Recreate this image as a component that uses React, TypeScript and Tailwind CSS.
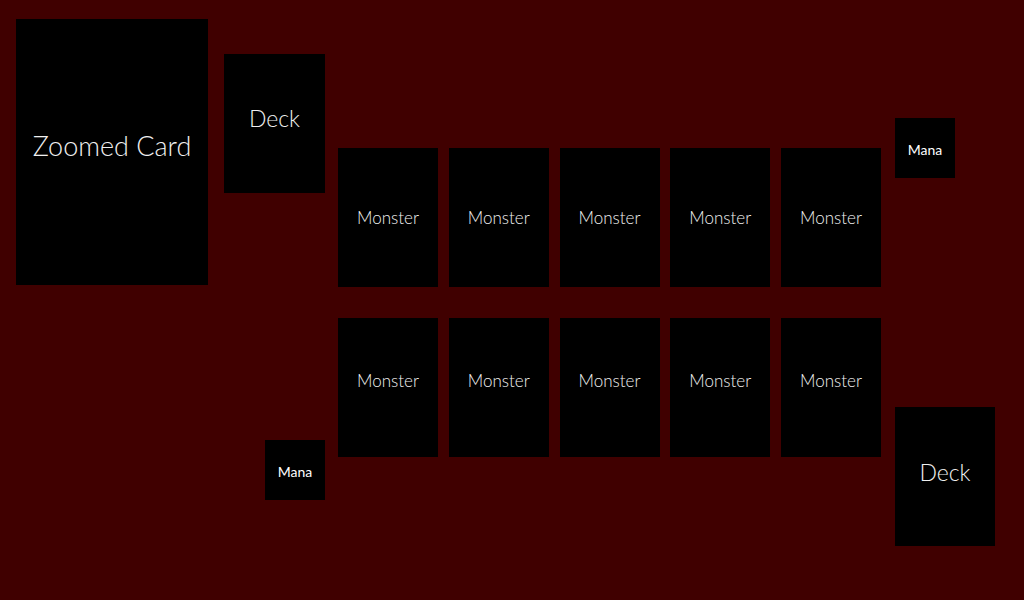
import React from 'react';

const Card: React.FC<{ label: string; className?: string; textClass?: string }> = ({ label, className = '', textClass = '' }) => (
  <div className={`bg-black flex items-center justify-center text-[#f0f0f0] ${className}`}>
    <span className={textClass}>{label}</span>
  </div>
);

const App: React.FC = () => {
  const monsters = Array.from({ length: 10 });

  return (
    <div className="w-[1024px] h-[600px] bg-[#400000] flex pl-[16px] font-['Lato','Liberation_Sans',sans-serif] font-light overflow-hidden">
      {/* zoomed card */}
      <Card
        label="Zoomed Card"
        className="mt-[19px] w-[192px] h-[266px] shrink-0 pb-[14px]"
        textClass="text-[27px] leading-none"
      />

      {/* player two deck + player one mana */}
      <div className="ml-[16px] w-[101px] shrink-0 flex flex-col items-end">
        <Card label="Deck" className="mt-[54px] w-[101px] h-[139px] pb-[11px]" textClass="text-[23px] leading-none" />
        <Card label="Mana" className="mt-[247px] w-[60px] h-[60px] pt-[3px]" textClass="text-[14px] leading-none font-normal text-white" />
      </div>

      {/* board */}
      <div className="ml-[13px] mt-[148px] grid grid-cols-[repeat(5,100px)] gap-x-[10.75px] gap-y-[31px] self-start shrink-0">
        {monsters.map((_, i) => (
          <Card
            key={i}
            label="Monster"
            className={`w-[100px] h-[139px] ${i >= 5 ? 'pb-[14px]' : ''}`}
            textClass="text-[17px] leading-none"
          />
        ))}
      </div>

      {/* player two mana + player one deck */}
      <div className="ml-[14px] w-[100px] shrink-0 flex flex-col">
        <Card label="Mana" className="mt-[118px] w-[60px] h-[60px] pt-[4px]" textClass="text-[14px] leading-none font-normal text-white" />
        <Card label="Deck" className="mt-[229px] w-[100px] h-[139px] pb-[9px]" textClass="text-[23px] leading-none" />
      </div>
    </div>
  );
};

export default App;
